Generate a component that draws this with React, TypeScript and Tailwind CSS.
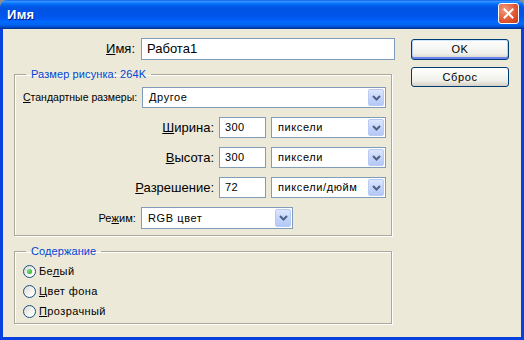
import React from 'react';

const Chevron = () => (
  <svg width="9" height="6" viewBox="0 0 9 6">
    <path d="M1 1 L4.5 4.5 L8 1" stroke="#4D6185" strokeWidth="2" fill="none" />
  </svg>
);

const Select: React.FC<{ value: string; className: string }> = ({ value, className }) => (
  <div className={`flex h-[21px] items-stretch border border-[#7F9DB9] bg-white ${className}`}>
    <span className="flex flex-1 items-center whitespace-nowrap pl-[6px] text-[11px] tracking-[0.6px] text-black">{value}</span>
    <span className="m-[1px] flex w-[16px] items-center justify-center rounded-[2px] border border-[#B9CBF5] bg-[linear-gradient(to_bottom,#DCE6FE,#C1D3FB_60%,#B4C8F6)]">
      <Chevron />
    </span>
  </div>
);

const Input: React.FC<{ value: string; className: string; big?: boolean }> = ({ value, className, big }) => (
  <div
    className={`flex h-[21px] items-center border border-[#7F9DB9] bg-white pl-[5px] text-black ${
      big ? 'h-[22px] text-[13px]' : 'text-[11px] tracking-[0.4px]'
    } ${className}`}
  >
    {value}
  </div>
);

const Radio: React.FC<{ checked?: boolean }> = ({ checked }) => (
  <span className="flex h-[13px] w-[13px] items-center justify-center rounded-full border border-[#1C5180] bg-[linear-gradient(135deg,#DCD9D0,#FFFFFF_80%)]">
    {checked && <span className="h-[5px] w-[5px] rounded-full bg-[radial-gradient(circle_at_35%_35%,#7CE07C,#21A121)]" />}
  </span>
);

const groupCls =
  'border border-[#ACA899] shadow-[inset_1px_1px_0_#fff,1px_1px_0_#fff] w-[378px] min-w-0 m-0';
const legendCls = 'ml-[3px] px-[5px] whitespace-nowrap text-[11px] leading-[12px] tracking-[0.1px] text-[#0046D5]';

export default function App() {
  return (
    <div className="h-[340px] w-[524px] bg-[#8E8E8E] font-['Liberation_Sans',sans-serif]">
      <div className="flex h-[340px] flex-col overflow-hidden rounded-t-[7px]">
        {/* title bar */}
        <div className="flex h-[29px] items-center justify-between bg-[linear-gradient(to_bottom,#0058EE_0%,#3A93FF_4%,#288EFF_7%,#127DFF_10%,#036FFC_14%,#0262EE_18%,#0057E5_24%,#0054E3_30%,#0055EB_56%,#005BF5_66%,#026AFE_76%,#0062EF_86%,#0052D6_92%,#0040AB_96%,#003092_100%)] pl-[7px] pr-[5px]">
          <span className="text-[13px] font-bold tracking-[0.3px] text-white [text-shadow:1px_1px_0_#0A1883]">Имя</span>
          <span className="mb-[2px] flex h-[21px] w-[21px] items-center justify-center rounded-[3px] border border-white bg-[radial-gradient(circle_at_30%_30%,#F19A7E,#E0542F_60%,#C13C17)]">
            <svg width="11" height="11" viewBox="0 0 11 11">
              <path d="M1.5 1.5 L9.5 9.5 M9.5 1.5 L1.5 9.5" stroke="#fff" strokeWidth="2" strokeLinecap="square" />
            </svg>
          </span>
        </div>

        {/* client */}
        <div className="flex flex-1 border-x-[3px] border-b-[3px] border-[#0842DE] bg-[#ECE9D8] pl-[11px]">
          <div className="flex w-[381px] flex-col">
            <div className="mt-[9px] flex items-center">
              <span className="w-[121px] text-right text-[13px] text-black">
                <u>И</u>мя:
              </span>
              <Input value="Работа1" className="ml-[6px] w-[254px] shrink-0" big />
            </div>

            <fieldset className={`${groupCls} mt-[8px] pb-[6px] pl-[8px] pr-[5px] pt-[7px]`}>
              <legend className={legendCls}>Размер рисунка: 264K</legend>
              <div className="flex flex-col gap-[9px]">
                <div className="flex items-center justify-between">
                  <span className="whitespace-nowrap text-[10.5px] text-black">
                    <u>С</u>тандартные размеры:
                  </span>
                  <Select value="Другое" className="w-[244px] shrink-0" />
                </div>
                {[
                  ['Ш', 'ирина:', '300', 'пиксели'],
                  ['В', 'ысота:', '300', 'пиксели'],
                  ['Р', 'азрешение:', '72', 'пиксели/дюйм'],
                ].map(([k, rest, v, unit]) => (
                  <div key={rest} className="flex items-center justify-end">
                    <span className="text-[13px] text-black">
                      <u>{k}</u>
                      {rest}
                    </span>
                    <Input value={v} className="ml-[5px] w-[47px]" />
                    <Select value={unit} className="ml-[5px] w-[115px]" />
                  </div>
                ))}
                <div className="flex items-center">
                  <span className="w-[113px] text-right text-[11px] tracking-[0.1px] text-black">
                    Ре<u>ж</u>им:
                  </span>
                  <Select value="RGB цвет" className="ml-[5px] h-[22px] w-[152px]" />
                </div>
              </div>
            </fieldset>

            <fieldset className={`${groupCls} mt-[9px] pb-[2px] pl-[8px] pt-[4px]`}>
              <legend className={legendCls}>Содержание</legend>
              {[
                ['Бе', 'л', 'ый', true],
                ['', 'Ц', 'вет фона', false],
                ['', 'П', 'розрачный', false],
              ].map(([a, k, b, c]) => (
                <div key={String(b)} className="flex h-[20px] items-center gap-[3px]">
                  <Radio checked={Boolean(c)} />
                  <span className="text-[11px] tracking-[0.4px] text-black">
                    {a}
                    <u>{k}</u>
                    {b}
                  </span>
                </div>
              ))}
            </fieldset>
          </div>

          <div className="ml-[16px] flex flex-col">
            <button className="mt-[10px] h-[21px] w-[98px] rounded-[3px] border border-[#003C74] bg-[linear-gradient(to_bottom,#FFFFFF,#F0F0EA_70%,#D6D0C5)] text-[11px] tracking-[0.6px] text-black shadow-[inset_0_1px_0_#CEE7FF,inset_0_-2px_0_#6982EE,inset_1px_0_0_#B9D1FA,inset_-1px_0_0_#B9D1FA]">
              OK
            </button>
            <button className="mt-[7px] h-[20px] w-[98px] rounded-[3px] border border-[#003C74] bg-[linear-gradient(to_bottom,#FFFFFF,#F0F0EA_70%,#D6D0C5)] text-[11px] tracking-[0.6px] text-black">
              Сброс
            </button>
          </div>
        </div>
      </div>
    </div>
  );
}
